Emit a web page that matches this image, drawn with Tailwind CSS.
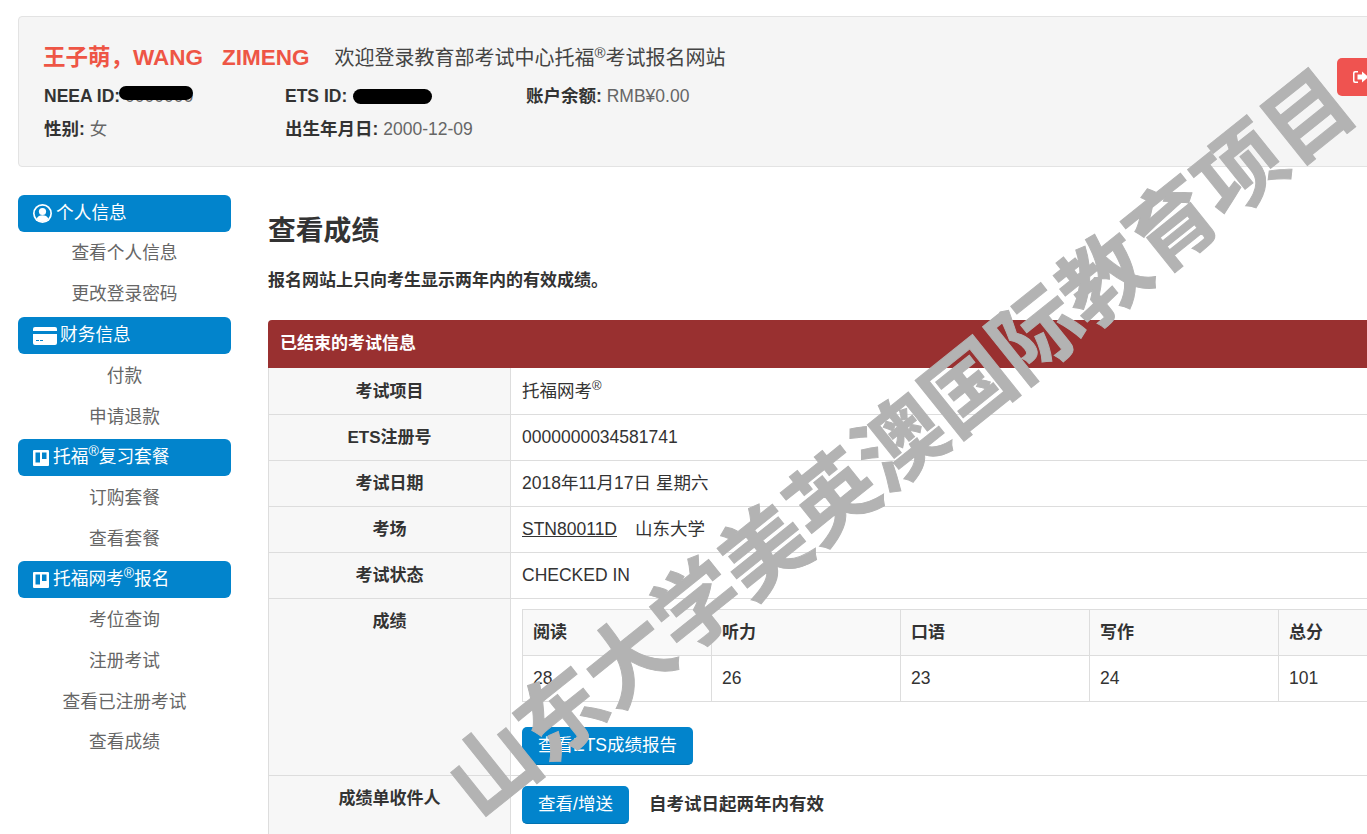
<!DOCTYPE html>
<html lang="zh-CN">
<head>
  <meta charset="UTF-8">
  <title>查看成绩</title>
  <script src="https://cdn.jsdelivr.net/npm/@tailwindcss/browser@4"></script>
</head>
<body class="bg-white text-[#333] overflow-hidden h-[834px] [font-family:'Liberation_Sans','Noto_Sans_CJK_SC',sans-serif]">
<div class="relative w-[1367px] h-[834px] overflow-hidden">
<div class="w-[1600px] pt-4 pl-[18px]">

  <!-- Header card -->
  <header class="flex w-[1500px] h-[151px] bg-[#f5f5f5] border border-[#e3e3e3] rounded pl-[25px]">
    <div class="w-[1293px]">
      <div class="flex items-center h-[28px] mt-[27px]">
        <span class="text-[22.500px] font-bold text-[#ee5545] -ml-[1px]">王子萌，WANG<span class="ml-[19px]">ZIMENG</span></span>
        <span class="text-[20px] text-[#444] ml-[25px]">欢迎登录教育部考试中心托福<sup class="text-[15px]">®</sup>考试报名网站</span>
      </div>
      <div class="grid grid-cols-[241px_241px_241px] mt-[8px] text-[17.500px] leading-[33px]">
        <div class="relative"><b>NEEA ID:</b> <span class="text-[#666]">0000000</span>
          <span class="absolute left-[75px] top-[6px] w-[74px] h-[14px] bg-black rounded-full"></span>
        </div>
        <div class="relative"><b>ETS ID:</b>
          <span class="absolute left-[68px] top-[9px] w-[79px] h-[15px] bg-black rounded-full"></span>
        </div>
        <div><b>账户余额:</b> <span class="text-[#666]">RMB¥0.00</span></div>
        <div><b>性别:</b> <span class="text-[#666]">女</span></div>
        <div><b>出生年月日:</b> <span class="text-[#666]">2000-12-09</span></div>
      </div>
    </div>
    <button class="w-[60px] h-[38px] mt-[41px] bg-[#ef5350] rounded-[5px] flex items-center pl-[16px]">
      <svg class="w-[16px] h-[14px]" viewBox="0 0 16 14" fill="#fff">
        <path d="M5 1H2a2 2 0 0 0-2 2v8a2 2 0 0 0 2 2h3v-1.500H2.500a1 1 0 0 1-1-1v-7a1 1 0 0 1 1-1H5z"/>
        <path d="M9 1.500 15.500 7 9 12.500V9.500H4.500v-5H9z"/>
      </svg>
    </button>
  </header>

  <div class="flex mt-[28px]">
    <!-- Sidebar -->
    <nav class="w-[213px] shrink-0 text-[17.700px] text-[#666] text-center">
      <div class="h-[37px] bg-[#0284cc] rounded-[6px] text-white flex items-center pl-[15px] gap-[4px]">
        <svg class="w-[19px] h-[19px]" viewBox="0 0 19 19"><circle cx="9.500" cy="9.500" r="9.500" fill="#fff"/><circle cx="9.500" cy="9.500" r="7.800" fill="#0284cc"/><circle cx="9.500" cy="7.500" r="3.600" fill="#fff"/><path d="M3.500 15c1-3 3.500-3.800 6-3.800s5 .8 6 3.800a7.800 7.800 0 0 1-12 0z" fill="#fff"/></svg>
        <span>个人信息</span>
      </div>
      <a class="block h-[41px] leading-[43px]">查看个人信息</a>
      <a class="block h-[41px] leading-[43px]">更改登录密码</a>

      <div class="mt-[3px] h-[37px] bg-[#0284cc] rounded-[6px] text-white flex items-center pl-[15px] gap-[3px]">
        <svg class="w-[24px] h-[18px]" viewBox="0 0 24 18" fill="#fff"><path d="M2 0h20a2 2 0 0 1 2 2v2H0V2a2 2 0 0 1 2-2z"/><path d="M0 7h24v9a2 2 0 0 1-2 2H2a2 2 0 0 1-2-2z"/><path d="M3 13h3v1H3zM7 13h3v1H7z" fill="#0284cc"/></svg>
        <span>财务信息</span>
      </div>
      <a class="block h-[41px] leading-[44px]">付款</a>
      <a class="block h-[41px] leading-[44px]">申请退款</a>

      <div class="mt-[3px] h-[37px] bg-[#0284cc] rounded-[6px] text-white flex items-center pl-[15px] gap-[4px]">
        <svg class="w-[16px] h-[16px]" viewBox="0 0 16 16"><rect width="16" height="16" rx="1" fill="#fff"/><rect x="2.500" y="2.500" width="4.500" height="10" fill="#0284cc"/><rect x="9" y="2.500" width="4.500" height="6.500" fill="#0284cc"/></svg>
        <span>托福<sup class="text-[14px]">®</sup>复习套餐</span>
      </div>
      <a class="block h-[41px] leading-[44px]">订购套餐</a>
      <a class="block h-[41px] leading-[44px]">查看套餐</a>

      <div class="mt-[3px] h-[37px] bg-[#0284cc] rounded-[6px] text-white flex items-center pl-[15px] gap-[4px]">
        <svg class="w-[16px] h-[16px]" viewBox="0 0 16 16"><rect width="16" height="16" rx="1" fill="#fff"/><rect x="2.500" y="2.500" width="4.500" height="10" fill="#0284cc"/><rect x="9" y="2.500" width="4.500" height="6.500" fill="#0284cc"/></svg>
        <span>托福网考<sup class="text-[14px]">®</sup>报名</span>
      </div>
      <a class="block h-[41px] leading-[44px]">考位查询</a>
      <a class="block h-[41px] leading-[44px]">注册考试</a>
      <a class="block h-[41px] leading-[44px]">查看已注册考试</a>
      <a class="block h-[41px] leading-[43px]">查看成绩</a>
    </nav>

    <!-- Main -->
    <main class="ml-[37px] w-[1232px] shrink-0">
      <h1 class="text-[27.800px] font-bold leading-[40px] mt-[16px]">查看成绩</h1>
      <p class="text-[17px] font-bold leading-[24px] mt-[18px]">报名网站上只向考生显示两年内的有效成绩。</p>

      <div class="mt-[27px] h-[48px] bg-[#993030] rounded-t text-white font-bold text-[17px] leading-[48px] pl-[12px]">已结束的考试信息</div>

      <table class="w-full table-fixed border-collapse text-[17.500px]">
        <colgroup><col class="w-[242px]"><col></colgroup>
        <tbody>
          <tr class="h-[46px] border-b border-[#ddd]">
            <th class="bg-[#f7f7f7] border-l border-r border-[#ddd] text-[17px] pt-[2px]">考试项目</th>
            <td class="pl-[11px]">托福网考<sup class="text-[13px]">®</sup></td>
          </tr>
          <tr class="h-[46px] border-b border-[#ddd]">
            <th class="bg-[#f7f7f7] border-l border-r border-[#ddd] text-[17px] pt-[2px]">ETS注册号</th>
            <td class="pl-[11px]">0000000034581741</td>
          </tr>
          <tr class="h-[46px] border-b border-[#ddd]">
            <th class="bg-[#f7f7f7] border-l border-r border-[#ddd] text-[17px] pt-[2px]">考试日期</th>
            <td class="pl-[11px]">2018年11月17日 星期六</td>
          </tr>
          <tr class="h-[46px] border-b border-[#ddd]">
            <th class="bg-[#f7f7f7] border-l border-r border-[#ddd] text-[17px] pt-[2px]">考场</th>
            <td class="pl-[11px]"><u>STN80011D</u><span class="ml-[18px]">山东大学</span></td>
          </tr>
          <tr class="h-[46px] border-b border-[#ddd]">
            <th class="bg-[#f7f7f7] border-l border-r border-[#ddd] text-[17px] pt-[2px]">考试状态</th>
            <td class="pl-[11px]">CHECKED IN</td>
          </tr>
          <tr class="h-[177px] border-b border-[#ddd]">
            <th class="bg-[#f7f7f7] border-l border-r border-[#ddd] text-[17px] align-top pt-[10px]">成绩</th>
            <td class="pl-[11px] align-top pt-[10px]">
              <table class="w-[946px] table-fixed border-collapse">
                <thead>
                  <tr class="h-[46px] bg-[#f9f9f9] text-left">
                    <th class="border border-[#ddd] pl-[10px] pt-[2px] text-[17px]">阅读</th>
                    <th class="border border-[#ddd] pl-[10px] pt-[2px] text-[17px]">听力</th>
                    <th class="border border-[#ddd] pl-[10px] pt-[2px] text-[17px]">口语</th>
                    <th class="border border-[#ddd] pl-[10px] pt-[2px] text-[17px]">写作</th>
                    <th class="border border-[#ddd] pl-[10px] pt-[2px] text-[17px]">总分</th>
                  </tr>
                </thead>
                <tbody>
                  <tr class="h-[46px]">
                    <td class="border border-[#ddd] pl-[10px]">28</td>
                    <td class="border border-[#ddd] pl-[10px]">26</td>
                    <td class="border border-[#ddd] pl-[10px]">23</td>
                    <td class="border border-[#ddd] pl-[10px]">24</td>
                    <td class="border border-[#ddd] pl-[10px]">101</td>
                  </tr>
                </tbody>
              </table>
              <button class="block mt-[25px] w-[171px] h-[38px] bg-[#0284cc] border-b border-[#0272b0] rounded-[5px] text-white">查看ETS成绩报告</button>
            </td>
          </tr>
          <tr class="h-[100px]">
            <th class="bg-[#f7f7f7] border-l border-r border-[#ddd] text-[17px] align-top pt-[10px]">成绩单收件人</th>
            <td class="pl-[11px] align-top pt-[10px]">
              <div class="flex items-center">
                <button class="w-[107px] h-[38px] bg-[#0284cc] border-b border-[#0272b0] rounded-[5px] text-white">查看/增送</button>
                <b class="ml-[20px]">自考试日起两年内有效</b>
              </div>
            </td>
          </tr>
        </tbody>
      </table>
    </main>
  </div>
</div>

<!-- Watermark -->
<div class="absolute left-[901px] top-[443px] -translate-x-1/2 -translate-y-1/2 -rotate-[38.700deg] whitespace-nowrap text-[87px] leading-none font-bold text-[#b3b3b3] [-webkit-text-stroke:1px_#b3b3b3] pointer-events-none">山东大学美英澳国际教育项目</div>
</div>
</body>
</html>
